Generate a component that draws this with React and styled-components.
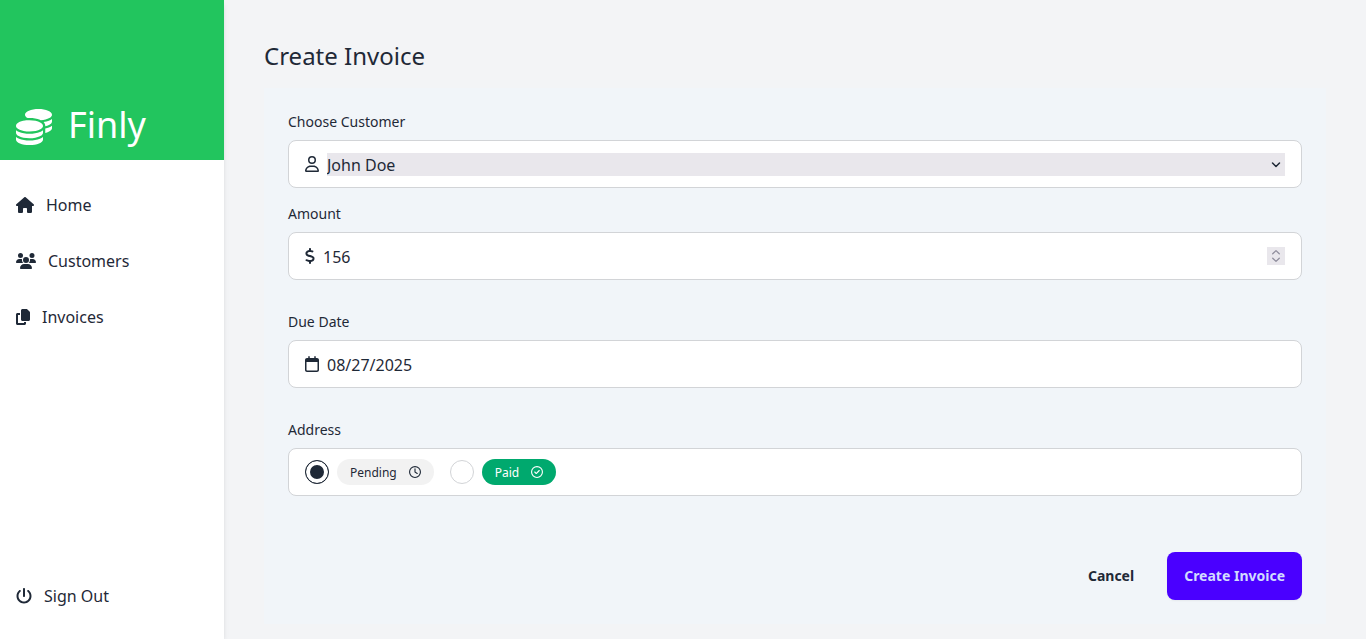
import React, { useState } from "react";
import styled, { createGlobalStyle, css } from "styled-components";
import {
  FaCoins,
  FaHouse,
  FaUsers,
  FaCopy,
  FaPowerOff,
  FaRegUser,
  FaDollarSign,
  FaRegCalendar,
  FaRegClock,
  FaRegCircleCheck,
} from "react-icons/fa6";

const GlobalStyle = createGlobalStyle`
  *, *::before, *::after { box-sizing: border-box; }
  body {
    margin: 0;
    background: #f3f4f6;
    color: #1f2937;
    font-family: "Noto Sans", sans-serif;
    font-size: 16px;
    line-height: 24px;
  }
  input, select, button { font: inherit; color: inherit; margin: 0; }
  svg { display: block; flex: none; }
`;

const Layout = styled.div`
  display: flex;
  min-height: 100vh;
`;

const Sidebar = styled.aside`
  display: flex;
  flex-direction: column;
  flex: none;
  width: 224px;
  background: #fff;
  box-shadow: 0 4px 6px -1px rgba(0, 0, 0, 0.1), 0 2px 4px -2px rgba(0, 0, 0, 0.1);
`;

const Brand = styled.a`
  display: flex;
  align-items: flex-end;
  gap: 16px;
  height: 160px;
  padding: 15px 16px;
  background: #22c55e;
  color: #fff;
  font-size: 36px;
  line-height: 40px;
  text-decoration: none;
`;

const Nav = styled.nav`
  display: flex;
  flex-direction: column;
  flex: 1;
  padding: 17px 0 15px;
`;

const navItem = css`
  display: flex;
  align-items: center;
  gap: 12px;
  height: 56px;
  padding: 0 16px;
  color: inherit;
`;

const NavLink = styled.a`
  ${navItem}
  text-decoration: none;
`;

const SignOut = styled.button`
  ${navItem}
  margin-top: auto;
  border: 0;
  background: none;
  cursor: pointer;
`;

const Icon = styled.span`
  flex: none;
  width: ${(p) => p.$width}px;
  svg { width: 100%; }
`;

const Main = styled.main`
  flex: 1;
  min-width: 0;
  padding: 40px 40px 8px;
`;

const Title = styled.h1`
  margin: 0 0 16px;
  font-size: 24px;
  font-weight: 400;
  line-height: 32px;
`;

const Form = styled.form`
  display: flex;
  flex-direction: column;
  padding: 24px;
  background: #f1f5f9;
`;

const Field = styled.div`
  display: flex;
  flex-direction: column;
  gap: 8px;
  margin-bottom: ${(p) => (p.$spacious ? "32px" : "16px")};
`;

const Label = styled.label`
  font-size: 14px;
  line-height: 20px;
`;

const Box = styled.div`
  display: flex;
  align-items: center;
  gap: ${(p) => (p.$wide ? "16px" : "8px")};
  height: 48px;
  padding: 0 16px;
  border: 1px solid #d2d4d7;
  border-radius: 8px;
  background: #fff;
`;

const SelectWrap = styled.div`
  display: grid;
  flex: 1;
  align-items: center;
  background: #e9e7ec;
  > * { grid-area: 1 / 1; }
  > svg {
    justify-self: end;
    width: 18px;
    height: 18px;
    pointer-events: none;
  }
`;

const Select = styled.select`
  width: 100%;
  height: 23px;
  padding: 0;
  border: 0;
  background: transparent;
  appearance: none;
`;

const Input = styled.input`
  flex: 1;
  min-width: 0;
  height: 24px;
  padding: 2px 0 0;
  border: 0;
  outline: 0;
  background: transparent;
  line-height: 22px;
  appearance: textfield;
  &::-webkit-inner-spin-button,
  &::-webkit-calendar-picker-indicator { display: none; }
  &::-webkit-datetime-edit,
  &::-webkit-datetime-edit-fields-wrapper,
  &::-webkit-datetime-edit-month-field,
  &::-webkit-datetime-edit-day-field,
  &::-webkit-datetime-edit-year-field { padding: 0; }
`;

const Spinner = styled.div`
  display: flex;
  flex-direction: column;
  width: 18px;
  height: 18px;
  background: #e9e7ec;
`;

const Step = styled.button`
  display: flex;
  align-items: center;
  justify-content: center;
  height: 9px;
  padding: 0;
  border: 0;
  background: none;
  color: #8f8d9c;
  svg { width: 18px; height: 9px; }
`;

const Option = styled.div`
  display: flex;
  align-items: center;
  gap: 8px;
`;

const Radio = styled.input`
  width: 24px;
  height: 24px;
  border: 1px solid #d2d4d7;
  border-radius: 50%;
  background: #fff;
  appearance: none;
  &:checked {
    border-color: #1f2937;
    background: #1f2937;
    box-shadow: 0 0 0 4px #fff inset;
  }
`;

const Badge = styled.label`
  display: flex;
  align-items: center;
  gap: 12px;
  height: 26px;
  padding: 0 13px;
  border-radius: 13px;
  background: ${(p) => (p.$paid ? "#00a96e" : "#f2f2f2")};
  color: ${(p) => (p.$paid ? "#fff" : "#1f2937")};
  font-size: 12px;
  line-height: 17px;
`;

const Actions = styled.div`
  display: flex;
  justify-content: flex-end;
  gap: 16px;
  margin-top: 24px;
`;

const Button = styled.button`
  height: 48px;
  padding: 0 17px;
  border: 0;
  border-radius: 8px;
  background: ${(p) => (p.$primary ? "#4a00ff" : "transparent")};
  color: ${(p) => (p.$primary ? "#d1dbff" : "#1f2937")};
  box-shadow: ${(p) => (p.$primary ? "0 1px 2px rgba(0, 0, 0, 0.05)" : "none")};
  font-size: 14px;
  font-weight: 700;
  line-height: 14px;
`;

const stroke = { fill: "none", stroke: "currentColor", strokeLinecap: "round", strokeLinejoin: "round" };

export default function App() {
  const [amount, setAmount] = useState(156);
  const [date, setDate] = useState("2025-08-27");
  const [status, setStatus] = useState("pending");

  return (
    <>
      <GlobalStyle />
      <Layout>
        <Sidebar>
          <Brand href="#home"><Icon $width={36}><FaCoins /></Icon>Finly</Brand>
          <Nav>
            <NavLink href="#home"><Icon $width={18}><FaHouse /></Icon>Home</NavLink>
            <NavLink href="#customers"><Icon $width={20}><FaUsers /></Icon>Customers</NavLink>
            <NavLink href="#invoices"><Icon $width={14}><FaCopy /></Icon>Invoices</NavLink>
            <SignOut type="button"><Icon $width={16}><FaPowerOff /></Icon>Sign Out</SignOut>
          </Nav>
        </Sidebar>
        <Main>
          <Title>Create Invoice</Title>
          <Form onSubmit={(e) => e.preventDefault()}>
            <Field>
              <Label htmlFor="customer">Choose Customer</Label>
              <Box>
                <Icon $width={14}><FaRegUser /></Icon>
                <SelectWrap>
                  <Select id="customer" defaultValue="john">
                    <option value="john">John Doe</option>
                  </Select>
                  <svg viewBox="0 0 18 18" {...stroke} strokeWidth="1.5" aria-hidden="true">
                    <path d="M5.500 8 9 11.500l3.500-3.500" />
                  </svg>
                </SelectWrap>
              </Box>
            </Field>
            <Field $spacious>
              <Label htmlFor="amount">Amount</Label>
              <Box>
                <Icon $width={10}><FaDollarSign /></Icon>
                <Input id="amount" type="number" value={amount} onChange={(e) => setAmount(e.target.value)} />
                <Spinner>
                  <Step type="button" aria-label="Increase amount" onClick={() => setAmount(Number(amount) + 1)}>
                    <svg viewBox="0 0 18 9" {...stroke} strokeWidth="1.3"><path d="M5.700 6.700 9 3.600l3.300 3.100" /></svg>
                  </Step>
                  <Step type="button" aria-label="Decrease amount" onClick={() => setAmount(Number(amount) - 1)}>
                    <svg viewBox="0 0 18 9" {...stroke} strokeWidth="1.3"><path d="M5.700 2.300 9 5.400l3.300-3.100" /></svg>
                  </Step>
                </Spinner>
              </Box>
            </Field>
            <Field $spacious>
              <Label htmlFor="due">Due Date</Label>
              <Box>
                <Icon $width={14}><FaRegCalendar /></Icon>
                <Input id="due" type="date" value={date} onChange={(e) => setDate(e.target.value)} />
              </Box>
            </Field>
            <Field $spacious role="radiogroup" aria-labelledby="status-label">
              <Label as="span" id="status-label">Address</Label>
              <Box $wide>
                <Option>
                  <Radio id="pending" type="radio" name="status" checked={status === "pending"} onChange={() => setStatus("pending")} />
                  <Badge htmlFor="pending">Pending<Icon $width={12}><FaRegClock /></Icon></Badge>
                </Option>
                <Option>
                  <Radio id="paid" type="radio" name="status" checked={status === "paid"} onChange={() => setStatus("paid")} />
                  <Badge $paid htmlFor="paid">Paid<Icon $width={12}><FaRegCircleCheck /></Icon></Badge>
                </Option>
              </Box>
            </Field>
            <Actions>
              <Button type="button">Cancel</Button>
              <Button $primary type="submit">Create Invoice</Button>
            </Actions>
          </Form>
        </Main>
      </Layout>
    </>
  );
}
